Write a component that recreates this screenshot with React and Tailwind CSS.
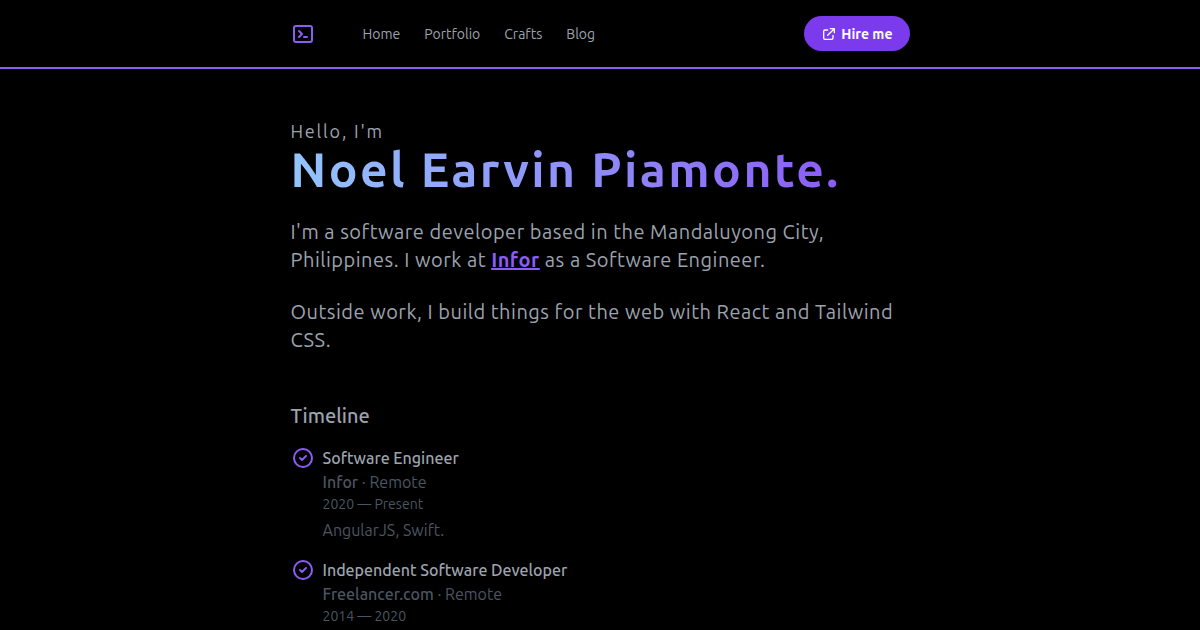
const links = ["Home", "Portfolio", "Crafts", "Blog"];

const jobs = [
  {
    title: "Software Engineer",
    company: "Infor",
    place: "Remote",
    years: "2020 — Present",
    note: "AngularJS, Swift.",
  },
  {
    title: "Independent Software Developer",
    company: "Freelancer.com",
    place: "Remote",
    years: "2014 — 2020",
  },
];

const icons = {
  terminal:
    "M8 9l3 3-3 3m5 0h3M5 20h14a2 2 0 002-2V6a2 2 0 00-2-2H5a2 2 0 00-2 2v12a2 2 0 002 2z",
  external:
    "M10 6H6a2 2 0 00-2 2v10a2 2 0 002 2h10a2 2 0 002-2v-4M14 4h6m0 0v6m0-6L10 14",
  check: "M9 12l2 2 4-4m6 2a9 9 0 11-18 0 9 9 0 0118 0z",
};

function Icon({ name, className }) {
  return (
    <svg
      viewBox="0 0 24 24"
      fill="none"
      stroke="currentColor"
      strokeWidth="2"
      strokeLinecap="round"
      strokeLinejoin="round"
      aria-hidden="true"
      className={className}
    >
      <path d={icons[name]} />
    </svg>
  );
}

function Header() {
  return (
    <header className="border-b-2 border-[#8b5cf6]">
      <div className="mx-auto flex max-w-[619px] items-center py-4">
        <a href="#home" aria-label="Noel Earvin Piamonte" className="mr-12 text-[#8b5cf6]">
          <Icon name="terminal" className="size-6" />
        </a>
        <nav className="flex gap-6 text-sm text-[#9ca3af]">
          {links.map((link) => (
            <a key={link} href={"#" + link.toLowerCase()}>
              {link}
            </a>
          ))}
        </nav>
        <a
          href="#hire"
          className="ml-auto flex h-[35px] items-center gap-1 rounded-full bg-[#7c3aed] px-[17px] text-sm font-semibold text-white"
        >
          <Icon name="external" className="size-4" />
          Hire me
        </a>
      </div>
    </header>
  );
}

function Job({ job }) {
  return (
    <li className="flex gap-2">
      <Icon name="check" className="size-6 shrink-0 text-[#8b5cf6]" />
      <div className="text-[#4b5563]">
        <h3 className="font-medium text-[#9ca3af]">{job.title}</h3>
        <p>
          <span className="font-medium">{job.company}</span> · {job.place}
        </p>
        <p className="text-sm">{job.years}</p>
        {job.note && <p className="mt-1">{job.note}</p>}
      </div>
    </li>
  );
}

export default function App() {
  return (
    <div className="h-screen overflow-hidden bg-black font-[Ubuntu,'Noto_Sans',sans-serif]">
      <Header />
      <main className="mx-auto max-w-[619px] pt-12 text-[#9ca3af]">
        <p className="text-lg tracking-widest">Hello, I'm</p>
        <h1 className="w-fit bg-linear-to-r/srgb from-[#93c5fd] to-[#8b5cf6] bg-clip-text text-5xl font-bold tracking-wider text-transparent">
          Noel Earvin Piamonte.
        </h1>
        <div className="mt-[25px] flex flex-col gap-6 text-xl tracking-wide">
          <p>
            I'm a software developer based in the Mandaluyong City, Philippines. I work at{" "}
            <a href="#infor" className="font-bold text-[#8b5cf6] underline">
              Infor
            </a>{" "}
            as a Software Engineer.
          </p>
          <p>Outside work, I build things for the web with React and Tailwind CSS.</p>
        </div>
        <h2 className="mt-12 text-xl font-medium">Timeline</h2>
        <ul className="mt-4 flex flex-col gap-4">
          {jobs.map((job) => (
            <Job key={job.title} job={job} />
          ))}
        </ul>
      </main>
    </div>
  );
}
